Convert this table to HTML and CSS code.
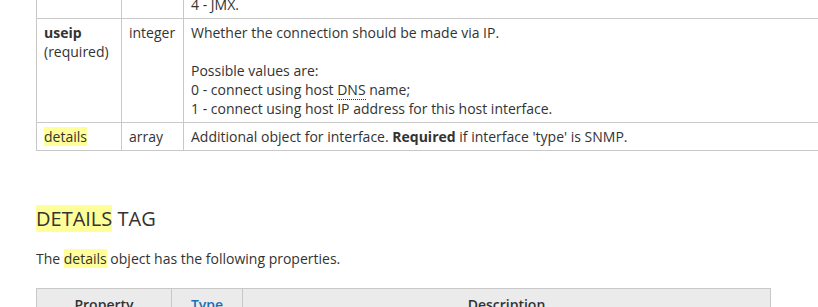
FILE: index.html
```html
<!DOCTYPE html>
<html>
<head>
<meta charset="utf-8">
<link rel="stylesheet" href="styles.css">
</head>
<body>
<div class="page">
  <table class="params params-top">
    <colgroup><col class="c1"><col class="c2"><col class="c3"></colgroup>
    <tr>
      <td></td>
      <td></td>
      <td>4 - JMX.</td>
    </tr>
    <tr>
      <td><b>useip</b><br>(required)</td>
      <td>integer</td>
      <td>Whether the connection should be made via IP.<br><br>Possible values are:<br>0 - connect using host <abbr title="Domain Name System">DNS</abbr> name;<br>1 - connect using host IP address for this host interface.</td>
    </tr>
    <tr>
      <td><span class="hl">details</span></td>
      <td>array</td>
      <td>Additional object for interface. <b>Required</b> if interface 'type' is SNMP.</td>
    </tr>
  </table>

  <h2 class="section-title"><span class="hl">DETAILS</span> TAG</h2>
  <p class="intro">The <span class="hl">details</span> object has the following properties.</p>

  <table class="params params-bottom">
    <colgroup><col class="d1"><col class="d2"><col class="d3"></colgroup>
    <tr class="head">
      <th>Property</th>
      <th><a class="link">Type</a></th>
      <th>Description</th>
    </tr>
    <tr>
      <td>version</td>
      <td>integer</td>
      <td>SNMP interface version.</td>
    </tr>
  </table>
</div>
</body>
</html>
```
FILE: styles.css
```css
html, body {
  margin: 0;
  padding: 0;
  overflow: hidden;
  background: #fff;
}
body {
  font-family: "Open Sans", "DejaVu Sans", sans-serif;
  font-size: 14px;
  line-height: 19px;
  color: #333;
}
.page {
  padding-left: 36px;
}
.params {
  border-collapse: collapse;
  table-layout: fixed;
}
.params td, .params th {
  border: 1px solid #c8c8c8;
  padding: 4px 7px;
  vertical-align: top;
  text-align: left;
}
.params-top {
  width: 820px;
  margin-top: -10px;
}
.c1 { width: 85px; }
.c2 { width: 62px; }
.c3 { width: auto; }
.hl {
  background: #ffff99;
}
abbr {
  text-decoration: none;
  border-bottom: 1px dotted #333;
}
.section-title {
  font-size: 20px;
  font-weight: normal;
  line-height: 26px;
  margin: 55px 0 0 0;
  color: #333;
}
.intro {
  margin: 17px 0 0 0;
}
.params-bottom {
  width: 735px;
  margin-top: 20px;
}
.d1 { width: 135px; }
.d2 { width: 71px; }
.d3 { width: auto; }
.params-bottom th {
  background: #ebebeb;
  font-weight: 600;
  text-align: center;
  padding: 6px 8px;
  color: #333;
}
.link {
  color: #1f6db5;
}
```
